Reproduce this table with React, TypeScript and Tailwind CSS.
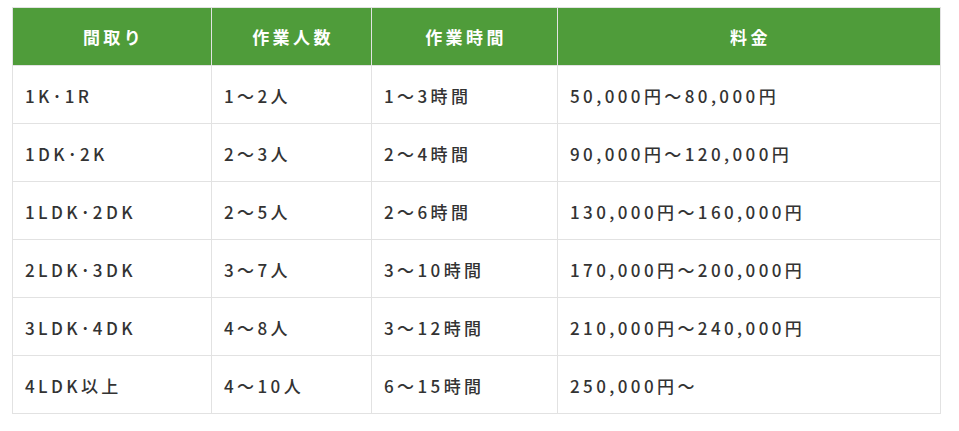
const HEADERS = ["間取り", "作業人数", "作業時間", "料金"];

const ROWS: string[][] = [
  ["1K･1R", "1〜2人", "1〜3時間", "50,000円〜80,000円"],
  ["1DK･2K", "2〜3人", "2〜4時間", "90,000円〜120,000円"],
  ["1LDK･2DK", "2〜5人", "2〜6時間", "130,000円〜160,000円"],
  ["2LDK･3DK", "3〜7人", "3〜10時間", "170,000円〜200,000円"],
  ["3LDK･4DK", "4〜8人", "3〜12時間", "210,000円〜240,000円"],
  ["4LDK以上", "4〜10人", "6〜15時間", "250,000円〜"],
];

const WIDTHS = ["w-[199px]", "w-[160px]", "w-[186px]", "w-auto"];

export default function App() {
  return (
    <div
      className="w-[959px] h-[431px] bg-white pt-[7px] pl-[12px]"
      style={{ fontFamily: '"Noto Sans CJK JP", "Noto Sans", sans-serif' }}
    >
      <table className="w-[929px] border-collapse table-fixed">
        <colgroup>
          {WIDTHS.map((w, i) => (
            <col key={i} className={w} />
          ))}
        </colgroup>
        <thead>
          <tr className="h-[58px] bg-[#4f9c3a]">
            {HEADERS.map((h) => (
              <th
                key={h}
                className="border border-[#e2e2e2] pl-[3px] text-center text-white font-bold text-[17px] tracking-[0.2em]"
              >
                {h}
              </th>
            ))}
          </tr>
        </thead>
        <tbody>
          {ROWS.map((row) => (
            <tr key={row[0]} className="h-[58px]">
              {row.map((cell, i) => (
                <td
                  key={i}
                  className="border border-[#e2e2e2] px-3 pt-[2px] text-left text-[#333333] font-medium text-[17px] tracking-[0.2em]"
                >
                  {cell}
                </td>
              ))}
            </tr>
          ))}
        </tbody>
      </table>
    </div>
  );
}
